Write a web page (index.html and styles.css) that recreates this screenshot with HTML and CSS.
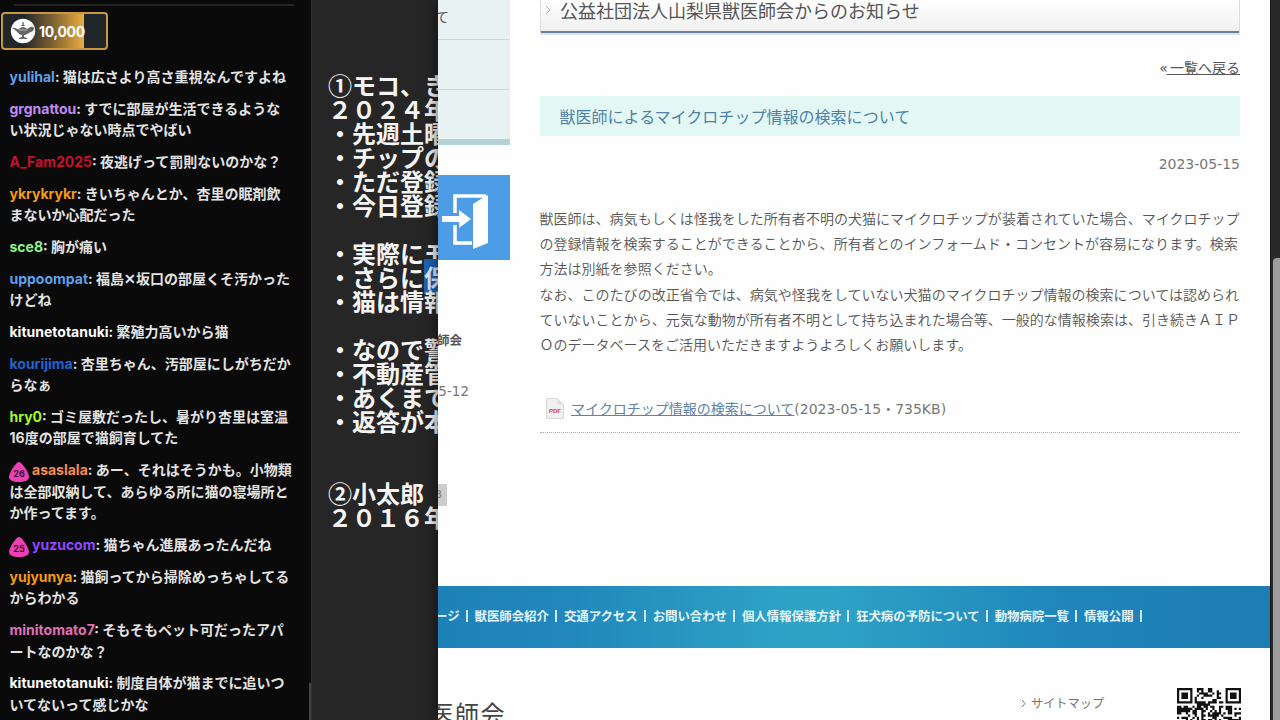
FILE: index.html
```html
<!DOCTYPE html>
<html lang="ja">
<head>
    <meta charset="UTF-8">
    <meta name="viewport" content="width=device-width, initial-scale=1.0">
    <title>獣医師によるマイクロチップ情報の検索について</title>
    <link rel="stylesheet" href="styles.css">
</head>
<body>
    <!-- Chat -->
    <aside class="chat">
        <div class="chat-line"></div>
        <div class="points">
            <svg class="lamp" width="26" height="26" viewBox="0 0 26 26">
                <circle cx="13" cy="13" r="12.2" fill="#fff"/>
                <path d="M2 10c4-1 5 2 7 1 1-1 2-2 4-2s3 1 4 2c2 0 3-3 6-2 2 1 1 4-2 5l-4 2c-1 1-2 1-3 1v2l3 1v1H9v-1l3-1v-2c-4 0-5-5-10-7z" fill="#666"/>
                <path d="M11 8q2-3 4 0zM12.400 4h1.200v3h-1.200z" fill="#555"/>
                <path d="M9 12h8" stroke="#bbb"/>
            </svg>
            <span>10,000</span>
        </div>
        <div class="messages">
            <p><b class="sky">yulihal</b>: 猫は広さより高さ重視なんですよね</p>
            <p><b class="lilac">grgnattou</b>: すでに部屋が生活できるような<br>い状況じゃない時点でやばい</p>
            <p><b class="red">A_Fam2025</b>: 夜逃げって罰則ないのかな？</p>
            <p><b class="orange">ykrykrykr</b>: きいちゃんとか、杏里の眠剤飲<br>まないか心配だった</p>
            <p><b class="mint">sce8</b>: 胸が痛い</p>
            <p><b class="sky">uppoompat</b>: 福島✕坂口の部屋くそ汚かった<br>けどね</p>
            <p><b class="white">kitunetotanuki:</b> 繁殖力高いから猫</p>
            <p><b class="blue">kourijima</b>: 杏里ちゃん、汚部屋にしがちだか<br>らなぁ</p>
            <p><b class="lime">hry0</b>: ゴミ屋敷だったし、暑がり杏里は室温<br>16度の部屋で猫飼育してた</p>
            <p><svg class="badge" viewBox="0 0 20 20"><path d="M10 0c3 0 10 11 10 15 0 3-4 5-10 5S0 18 0 15C0 11 7 0 10 0z" fill="#ee3fb5"/><text x="10" y="14.500">26</text></svg><b class="coral">asaslala</b>: あー、それはそうかも。小物類<br>は全部収納して、あらゆる所に猫の寝場所と<br>か作ってます。</p>
            <p><svg class="badge" viewBox="0 0 20 20"><path d="M10 0c3 0 10 11 10 15 0 3-4 5-10 5S0 18 0 15C0 11 7 0 10 0z" fill="#ee3fb5"/><text x="10" y="14.500">25</text></svg><b class="purple">yuzucom</b>: 猫ちゃん進展あったんだね</p>
            <p><b class="orange">yujyunya</b>: 猫飼ってから掃除めっちゃしてる<br>からわかる</p>
            <p><b class="pink">minitomato7</b>: そもそもペット可だったアパ<br>ートなのかな？</p>
            <p><b class="white">kitunetotanuki:</b> 制度自体が猫までに追いつ<br>いてないって感じかな</p>
        </div>
        <div class="chat-thumb"></div>
    </aside>

    <!-- Memo -->
    <section class="memo">
<pre>①モコ、き
２０２４年
・先週土曜
・チップの
・ただ登録
・今日登録

・実際にモ
・さらに<mark>保</mark>
・猫は情報

・なので警
・不動産管
・あくまで
・返答が本


②小太郎
２０１６年</pre>
    </section>

    <!-- Browser window -->
    <main class="window">
        <div class="page">
            <div class="side">
                <ul class="side-menu">
                    <li>て</li>
                    <li></li>
                    <li></li>
                </ul>
                <a class="login">
                    <svg width="72" height="85" viewBox="0 0 72 85">
                        <path d="M17 38V21h31M17 50v18h17" fill="none" stroke="#fff" stroke-width="3.500"/>
                        <path d="M50 20v48L35 74V29l11-7z" fill="#fff"/>
                        <path d="M4 41h17v-6l12 9-12 9v-6H4z" fill="#fff"/>
                    </svg>
                </a>
                <div class="side-name">師会</div>
                <div class="side-date">5-12</div>
                <div class="side-count">3</div>
            </div>
            <div class="content">
                <h1><svg width="7" height="10" viewBox="0 0 7 10"><path d="M1 1l4 4-4 4" fill="none" stroke="#aaa"/></svg>公益社団法人山梨県獣医師会からのお知らせ</h1>
                <div class="back"><i>«</i><a>&nbsp;一覧へ戻る</a></div>
                <h2>獣医師によるマイクロチップ情報の検索について</h2>
                <div class="date">2023-05-15</div>
                <p class="text">獣医師は、病気もしくは怪我をした所有者不明の犬猫にマイクロチップが装着されていた場合、マイクロチップ<br>の登録情報を検索することができることから、所有者とのインフォームド・コンセントが容易になります。検索<br>方法は別紙を参照ください。<br>なお、このたびの改正省令では、病気や怪我をしていない犬猫のマイクロチップ情報の検索については認められ<br>ていないことから、元気な動物が所有者不明として持ち込まれた場合等、一般的な情報検索は、引き続きＡＩＰ<br>Ｏのデータベースをご活用いただきますようよろしくお願いします。</p>
                <div class="file">
                    <svg width="18" height="21" viewBox="0 0 18 21">
                        <path d="M.5.5h11l6 6v14H.5z" fill="#f0f0f0" stroke="#d8d8d8"/>
                        <path d="M11.500.5v6h6z" fill="#ddd"/>
                        <text x="9" y="14.500">PDF</text>
                    </svg>
                    <a>マイクロチップ情報の検索について</a><span>(2023-05-15・735KB)</span>
                </div>
            </div>
        </div>
        <nav class="footer-nav">
            <span>ージ</span><span>獣医師会紹介</span><span>交通アクセス</span><span>お問い合わせ</span><span>個人情報保護方針</span><span>狂犬病の予防について</span><span>動物病院一覧</span><span>情報公開</span>
        </nav>
        <footer>
            <div class="org"><span>医師会</span></div>
            <div class="sitemap"><svg width="6" height="9" viewBox="0 0 6 9"><path d="M1 1l3 3.500L1 8" fill="none" stroke="#777"/></svg>サイトマップ</div>
            <svg id="qr" width="64" height="64" viewBox="0 0 29 29"></svg>
        </footer>
    </main>
    <div class="scrollbar"><div class="thumb"></div></div>

    <script>
        // Draw the QR code modules
        const size = 29;
        let seed = 41;
        let d = "";

        function finder(x, y) {
            const dx = Math.abs(x - 3), dy = Math.abs(y - 3);
            const r = Math.max(dx, dy);
            return r === 3 || r < 2;
        }

        for (let y = 0; y < size; y++) {
            for (let x = 0; x < size; x++) {
                seed = (seed * 1103515245 + 12345) % 2147483648;
                let on = seed / 2147483648 > 0.48;
                if (x < 8 && y < 8) on = x < 7 && y < 7 && finder(x, y);
                if (x > 20 && y < 8) on = x > 21 && y < 7 && finder(x - 22, y);
                if (x < 8 && y > 20) on = x < 7 && y > 21 && finder(x, y - 22);
                if (on) d += `M${x} ${y}h1v1h-1z`;
            }
        }
        document.getElementById("qr").innerHTML = `<path d="${d}" fill="#111"/>`;
    </script>
</body>
</html>
```
FILE: styles.css
```css
* {
    box-sizing: border-box;
}

body {
    margin: 0;
    width: 1280px;
    height: 720px;
    display: flex;
    overflow: hidden;
    background-color: #262626;
    font-family: "Noto Sans CJK JP", sans-serif;
}

h1, h2, p, ul, pre {
    margin: 0;
    padding: 0;
}

h1, h2 {
    font-weight: normal;
}

/* Chat */
.chat {
    position: relative;
    width: 312px;
    flex: none;
    background-color: #0a0a0a;
    border-right: 1px solid #303030;
    overflow: hidden;
}

.chat-line {
    width: 280px;
    height: 2px;
    margin: 4px 0 6px 14px;
    background-color: #242424;
}

.points {
    width: 107px;
    height: 38px;
    margin-left: 1px;
    padding-left: 7px;
    display: flex;
    align-items: center;
    gap: 3px;
    border: 2px solid #c9973f;
    border-radius: 4px;
    background: linear-gradient(90deg, #20262a 20%, #8a6a32 52%, #edae42 79%, #20262a 79%);
    color: #fff;
    font: bold 14px Inter, sans-serif;
    letter-spacing: -0.3px;
}

.messages {
    margin: 16px 0 0 9.500px;
    display: flex;
    flex-direction: column;
    gap: 10.100px;
    color: #e2e2e2;
    font-family: Inter, "Noto Sans CJK JP", sans-serif;
    font-size: 14px;
    font-weight: 700;
    line-height: 21.600px;
    white-space: nowrap;
}

.messages b {
    font-weight: 700;
}

.badge {
    width: 20px;
    height: 20px;
    margin: -3px 3px -3px -0.5px;
    vertical-align: -4px;
}

.badge text {
    font: bold 9px Inter, sans-serif;
    text-anchor: middle;
    fill: #3a1030;
}

.sky { color: #5f9fe8; }
.lilac { color: #c08af5; }
.red { color: #c8102e; }
.orange { color: #f59b14; }
.mint { color: #8cf58c; }
.white { color: #fff; }
.blue { color: #1f62d0; }
.lime { color: #9bfa28; }
.coral { color: #f58a55; }
.purple { color: #9147ff; }
.pink { color: #e070b5; }

.chat-thumb {
    position: absolute;
    right: 0;
    bottom: 0;
    width: 2px;
    height: 37px;
    background-color: #444;
}

/* Memo */
.memo {
    width: 126px;
    flex: none;
    padding: 73px 0 0 16px;
    overflow: hidden;
    background-color: #262626;
}

.memo pre {
    color: #f4f4f4;
    font: bold 24px/24px "Noto Sans CJK JP", sans-serif;
}

.memo mark {
    background-color: #1c63b4;
    color: #e0ecff;
}

/* Browser window */
.window {
    position: relative;
    width: 832px;
    height: 720px;
    flex: none;
    overflow: hidden;
    background-color: #fefefe;
    box-shadow: 0 0 14px rgba(0, 0, 0, 0.6);
    color: #555;
}

.page {
    height: 586px;
    display: flex;
    gap: 30px;
}

.side {
    width: 72px;
    display: flex;
    flex-direction: column;
    align-items: flex-end;
    overflow: hidden;
    flex: none;
    white-space: nowrap;
}

.side-menu {
    width: 100%;
    height: 145px;
    list-style: none;
    background-color: #e9f2f3;
    border-bottom: 6px solid #b5d2d7;
    font-size: 14px;
    line-height: 32px;
}

.side-menu li {
    height: 50px;
    margin-left: -3px;
    border-bottom: 1px solid #cfd9dc;
}

.side-menu li:first-child {
    height: 40px;
}

.side-menu li:last-child {
    border: none;
}

.login {
    height: 85px;
    margin-top: 30px;
    background-color: #4d9de6;
}

.login svg {
    display: block;
}

.side-name {
    margin: 70px 48px 0 0;
    font-size: 12.500px;
    font-weight: 700;
    line-height: 20px;
}

.side-date {
    margin: 31px 41px 0 0;
    font: 13.500px/20px "DejaVu Sans", sans-serif;
    color: #777;
}

.side-count {
    width: 12px;
    height: 22px;
    margin: 83px 63px 0 0;
    background-color: #ccc;
    color: #777;
    font: 11px/22px "DejaVu Sans", sans-serif;
}

.content {
    width: 700px;
}

h1 {
    height: 35px;
    display: flex;
    align-items: center;
    gap: 8px;
    padding: 0 0 13px 4px;
    border: 1px solid #ddd;
    border-top: none;
    border-bottom: 2px solid #dbe4f0;
    box-shadow: inset 0 -2px #6c8096;
    background: linear-gradient(#fff, #efefef);
    font-size: 18px;
    line-height: 24px;
}

.back {
    height: 61px;
    padding-top: 20px;
    text-align: right;
    font-size: 14px;
    line-height: 24px;
}

.back i {
    margin-right: -1px;
    font-family: "DejaVu Sans", sans-serif;
    font-style: normal;
}

.back a, .file a {
    text-decoration: underline;
}

h2 {
    height: 40px;
    padding-left: 19.5px;
    background-color: #e3f8f5;
    color: #5080a8;
    font-size: 16px;
    letter-spacing: 0.03px;
    line-height: 41px;
}

.date {
    margin-top: 16px;
    text-align: right;
    color: #777;
    font: 14px/24px "DejaVu Sans", sans-serif;
}

.text {
    margin-top: 30px;
    margin-left: -0.5px;
    font-size: 14px;
    font-weight: 350;
    letter-spacing: 0.02px;
    line-height: 25.200px;
    white-space: nowrap;
}

.file {
    height: 47px;
    margin-top: 29px;
    padding: 0 0 2px 6px;
    display: flex;
    align-items: center;
    border-bottom: 1px dotted #aaa;
    font-size: 14px;
}

.file svg {
    margin-right: 7px;
}

.file svg text {
    font: bold 6px "Liberation Sans", sans-serif;
    text-anchor: middle;
    fill: #d84444;
}

.file a {
    color: #5f83a8;
}

.file span {
    font-family: "DejaVu Sans", "Noto Sans CJK JP", sans-serif;
    font-size: 14px;
    color: #777;
}

.footer-nav {
    height: 62px;
    padding-bottom: 2px;
    display: flex;
    align-items: center;
    background: linear-gradient(90deg, #1e82b8 0%, #2186bb 14%, #2ea3c6 42%, #2ea3c6 47%, #1f85bb 76%, #1e7db2 100%);
    color: #e4f5fb;
    font-size: 12.400px;
    font-weight: 700;
    white-space: nowrap;
}

.footer-nav span {
    display: flex;
    align-items: center;
    margin-right: 7px;
}

.footer-nav span:first-child {
    margin-left: -3px;
}

.footer-nav span::after {
    content: "";
    width: 2px;
    height: 12px;
    margin-left: 6px;
    background-color: #cdeaf5;
}

footer {
    display: flex;
    height: 72px;
}

.org {
    width: 68px;
    display: flex;
    justify-content: flex-end;
    flex: none;
    margin-top: 47px;
    font-size: 24px;
    letter-spacing: 1.500px;
    line-height: 36px;
    white-space: nowrap;
    color: #444;
}

.sitemap {
    display: flex;
    align-items: center;
    gap: 4px;
    width: 156px;
    height: 20px;
    margin: 45px 0 0 515px;
    font-size: 12.200px;
    color: #777;
}

#qr {
    flex: none;
    margin-top: 40px;
}

/* Page scrollbar */
.scrollbar {
    position: relative;
    width: 10px;
    padding: 258px 0 0 2px;
    background-color: #292929;
    border-left: 1px solid #111;
}

.thumb {
    height: 480px;
    border-radius: 4px 0 0 0;
    background-color: #9c9c9c;
}
```
